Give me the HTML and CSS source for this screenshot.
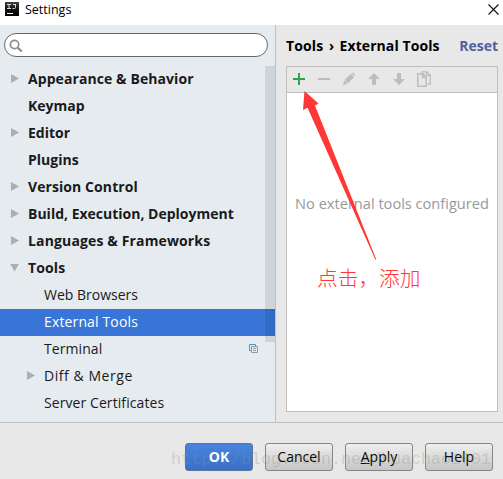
FILE: index.html
```
<!DOCTYPE html>
<html lang="en">
<head>
<meta charset="utf-8">
<title>Settings</title>
<link rel="stylesheet" href="styles.css">
</head>
<body>
<header class="titlebar">
  <svg class="logo" width="14" height="14" viewBox="0 0 14 14"><defs><linearGradient id="lg" x2="0" y2="1"><stop stop-color="#444"/><stop offset=".5" stop-color="#111"/><stop offset="1" stop-color="#000"/></linearGradient></defs><path fill="url(#lg)" d="M0 0h14v14H0z"/><path d="M2 2.500h4M4 2v5M2 6.500h4M8 2.500h3M10.500 2v3.500q0 1-1 1H7.500" fill="none" stroke="#ddd"/><path fill="#fff" d="M2 11h6v1H2z"/></svg>
  <span class="title">Settings</span>
  <svg class="close" width="11" height="11" viewBox="0 0 11 11"><path d="M.5.5l10 10M10.500.5l-10 10" stroke="#111" stroke-width="1.100"/></svg>
</header>
<main class="content">
  <aside class="sidebar">
    <div class="search"><svg width="14" height="14" viewBox="0 0 14 14" fill="none" stroke="#8e8e8e"><circle cx="5.500" cy="5.500" r="4.200" stroke-width="1.700"/><path d="M8.500 8.500l4.300 4" stroke-width="2.200"/></svg></div>
    <ul class="tree">
      <li class="row"><i class="arrow"></i><span class="wide">Appearance &amp; Behavior</span></li>
      <li class="row"><span>Keymap</span></li>
      <li class="row"><i class="arrow"></i><span>Editor</span></li>
      <li class="row"><span>Plugins</span></li>
      <li class="row"><i class="arrow"></i><span class="wide">Version Control</span></li>
      <li class="row"><i class="arrow"></i><span>Build, Execution, Deployment</span></li>
      <li class="row"><i class="arrow"></i><span class="wider">Languages &amp; Frameworks</span></li>
      <li class="row"><i class="arrow open"></i><span class="wider">Tools</span></li>
      <li class="row child"><span>Web Browsers</span></li>
      <li class="row child selected"><span class="wider">External Tools</span></li>
      <li class="row child"><span class="wide">Terminal</span><svg class="project" width="10" height="10" viewBox="0 0 10 10" fill="none"><path d="M2 6.500H.5v-6h6V2" stroke="#4f97bd"/><path d="M2.500 2.500h6v6h-6zM4 4.500h3M4 6.500h3" stroke="#999"/></svg></li>
      <li class="row child"><i class="arrow"></i><span class="widest">Diff &amp; Merge</span></li>
      <li class="row child"><span class="wide">Server Certificates</span></li>
    </ul>
    <div class="scrollbar"></div>
  </aside>
  <section class="page">
    <div class="heading"><h1><span class="wider">Tools</span><span class="sep">›</span><span class="wide">External Tools</span></h1><a class="reset">Reset</a></div>
    <div class="panel">
      <div class="toolbar">
        <svg width="138" height="17" viewBox="0 0 138 17" fill="#bdbdbd"><path fill="#2da34b" d="M0 7h5V2h2v5h5v2H7v5H5V9H0z"/><path d="M25 7h12v2H25z"/><path d="M50 14l1.200-4.700 3.500 3.500zM51.700 8.700l6-5.700 3.300 3.300-6 6zM58.400 2.300q1.100-.8 2.100-.3l1.300 1.300q.5 1-.3 2.300z"/><path d="M81 2l6 6h-4v6h-4V8h-4zM106 14l6-6h-4V2h-4v6h-4z"/><g fill="none" stroke="#bdbdbd" stroke-width="1.500"><path d="M124.800 2.800h5.200l3.200 3.200v9.200h-8.400zM129.500 3v3.500h3.500"/><path d="M128 .8h6l3.300 3.200v9h-2.500M133.500 1v3.300h3.500" stroke-width="1.300"/></g></svg>
      </div>
      <div class="empty"><span>No external tools configured</span></div>
    </div>
  </section>
</main>
<footer class="footer">
  <button class="btn primary"><span>OK</span></button>
  <button class="btn"><span>Cancel</span></button>
  <button class="btn"><span><u>A</u>pply</span></button>
  <button class="btn"><span>Help</span></button>
</footer>
<svg class="pointer" width="76" height="172" viewBox="0 0 76 172"><path fill="#ff3737" d="M1.500 1L0 20l4.500-2.300L72.300 169.500h1L12 15.500l3.500-2z"/></svg>
<div class="note">点击，添加</div>
<div class="watermark">http://blog.csdn.net/huachao1001</div>
</body>
</html>
```
FILE: styles.css
```
* { box-sizing: border-box; }
body {
  margin: 0; width: 503px; height: 479px; overflow: hidden; position: relative;
  display: flex; flex-direction: column; background: #e8e8e8;
  font: 14px/20px "Open Sans", "Noto Sans", sans-serif; color: #1a1a1a;
}
.titlebar { height: 25px; flex: none; background: #fff; display: flex; padding: 2px 4px 0 5px; }
.title { margin: -2px 0 0 6px; font-size: 12.500px; line-height: 20px; color: #000; }
.close { margin: 2px 0 0 auto; }
.content { height: 398px; flex: none; display: flex; border-bottom: 1px solid #bfbfbf; }
.sidebar { width: 276px; flex: none; position: relative; background: #e5ebef; border-right: 1px solid #bfbfbf; padding-top: 8px; }
.search { width: 264px; height: 24px; margin-left: 4px; border: 1px solid #686868; border-radius: 12px; background: #fff; padding: 5px 4px; }
.search svg { display: block; }
.tree { list-style: none; margin: 9px 0 0; padding: 0; }
.row { height: 27px; display: flex; align-items: center; padding: 0 0 2px 28px; font-weight: 700; white-space: nowrap; line-height: 25px; }
.child { padding-left: 44px; font-weight: 400; }
.wide { letter-spacing: .08px; }
.wider { letter-spacing: .14px; }
.widest { letter-spacing: .55px; }
.arrow { width: 8px; height: 9px; margin: 0 9px 0 -17px; background: #adadad; clip-path: polygon(0 0, 100% 50%, 0 100%); }
.arrow.open { width: 9px; height: 8px; margin: 0 9px 0 -18px; clip-path: polygon(0 0, 100% 0, 50% 100%); }
.selected { background: #3875d6; color: #fff; }
.project { margin: 0 16px 0 auto; }
.scrollbar { position: absolute; right: 0; top: 41px; width: 10px; height: 276px; background: rgba(0, 20, 40, .1); }
.page { flex: 1; padding: 8px 5px 10px 10px; display: flex; flex-direction: column; }
.heading { height: 33px; padding-top: 3px; display: flex; justify-content: space-between; font-weight: 700; color: #000; }
.heading h1 { margin: 0; font: inherit; white-space: nowrap; }
.sep { margin: 0 5.500px; }
.reset { color: #515f9e; }
.panel { flex: 1; border: 1px solid #bfbfbf; background: #fff; }
.toolbar { height: 26px; background: #e8e8e8; border-bottom: 1px solid #bfbfbf; padding: 4px 0 0 6px; }
.toolbar svg { display: block; }
.empty { padding-top: 100px; font-size: 14.600px; text-align: center; color: #999; white-space: nowrap; }
.footer { flex: 1; display: flex; gap: 12px; padding: 20px 0 0 185px; }
.btn { width: 68px; height: 28px; padding: 0; border: 1px solid #858585; border-radius: 3px; background: linear-gradient(#eee, #c6c6c6); font: 14px/24px "Open Sans", sans-serif; color: #000; }
.primary { background: linear-gradient(#4884df, #386fc9); border-color: #5f7493; color: #fff; font-weight: 700; }
.pointer { position: absolute; left: 303px; top: 90px; }
.note { position: absolute; left: 317px; top: 262px; font: 300 20.700px/30px "Noto Sans CJK SC", sans-serif; color: #ff3737; white-space: nowrap; }
.watermark { position: absolute; left: 171px; top: 449px; font: 16.670px/22px "Liberation Mono", monospace; color: rgba(145, 145, 125, .3); white-space: nowrap; }
```
